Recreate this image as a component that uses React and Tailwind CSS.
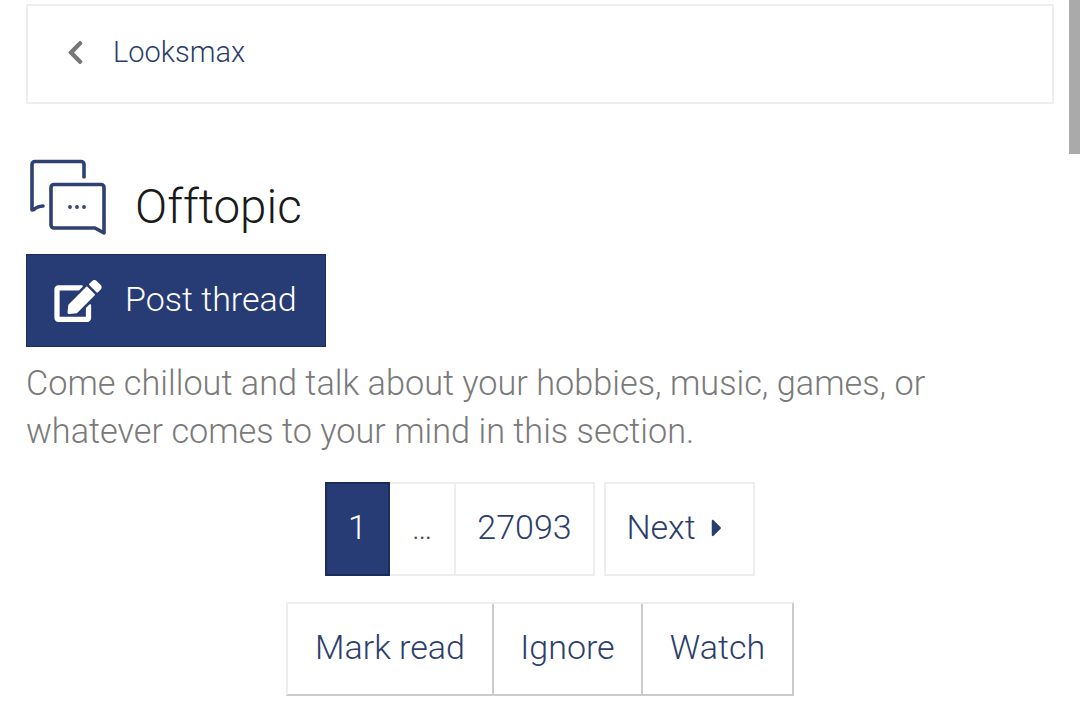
import React from "react";
import { FaEdit, FaChevronLeft, FaCaretRight } from "react-icons/fa";

const ChatIcon = () => (
  <svg width="80" height="80" viewBox="0 0 80 80" fill="none" stroke="#2f4170" strokeWidth="3.6" strokeLinecap="round" strokeLinejoin="round">
    <path d="M54 18V5.5a3 3 0 0 0-3-3H5a3 3 0 0 0-3 3V51l2-.5q3-3 9-3.500" />
    <path d="M24 25.500h47a3 3 0 0 1 3 3V74l-9-5H24a3 3 0 0 1-3-3V28.500a3 3 0 0 1 3-3z" />
    <circle cx="40" cy="48" r="0.8" fill="#2f4170" strokeWidth="2.2" />
    <circle cx="47" cy="48" r="0.8" fill="#2f4170" strokeWidth="2.2" />
    <circle cx="54" cy="48" r="0.8" fill="#2f4170" strokeWidth="2.2" />
  </svg>
);

const PageCell = ({ children, className = "" }) => (
  <a className={"flex items-center justify-center h-[94px] pb-[3px] border-2 border-[#eeeeee] text-[#2c3e6b] " + className}>
    {children}
  </a>
);

export default function App() {
  return (
    <div className="relative h-[721px] overflow-hidden bg-white px-[26px] pt-1 font-['Roboto',sans-serif] font-light">
      {/* Breadcrumb */}
      <div className="flex items-center h-[100px] border-2 border-[#eeeeee] pl-[34px]">
        <FaChevronLeft className="text-[#777777] text-[27px] w-[27px] mb-[3px]" />
        <span className="ml-[24px] pb-[3px] text-[29px] text-[#2c3e6b]">Looksmax</span>
      </div>

      {/* Title */}
      <div className="flex items-center mt-[55px] h-[80px] pl-[4px]">
        <ChatIcon />
        <h1 className="ml-[25px] mt-[16px] text-[47.500px] leading-[60px] text-[#1a1a1a] font-light">Offtopic</h1>
      </div>

      <button className="flex items-center mt-[15px] w-[300px] h-[93px] pl-[27px] bg-[#273c75] border border-[#1c2c58] text-white">
        <FaEdit className="text-[42px] w-[48px]" />
        <span className="ml-[23px] pb-[3px] text-[34px]">Post thread</span>
      </button>

      <p className="mt-[12px] text-[34.250px] leading-[48px] text-[#7a7a7a]">
        Come chillout and talk about your hobbies, music, games, or whatever comes to your mind in this section.
      </p>

      {/* Pagination */}
      <div className="flex justify-center mt-[27px] gap-[9px] text-[34px]">
        <div className="flex">
          <PageCell className="w-[65px] !bg-[#273c75] !border-[#1c2c58] !text-white">1</PageCell>
          <PageCell className="w-[66px] border-l-0 !text-[#555555] text-[32px]">…</PageCell>
          <PageCell className="w-[139px] border-l-0">27093</PageCell>
        </div>
        <PageCell className="w-[151px]">
          Next
          <FaCaretRight className="ml-[7px] mr-[2px] text-[28px]" />
        </PageCell>
      </div>

      {/* Actions */}
      <div className="flex justify-center mt-[26px] text-[34px] text-[#2c3e6b]">
        <div className="flex h-[94px] border-2 border-[#eeeeee] border-b-[#cccccc] border-r-[#cccccc]">
          <a className="flex items-center justify-center w-[206px] pb-[3px] border-r-2 border-[#cccccc]">Mark read</a>
          <a className="flex items-center justify-center w-[149px] pb-[3px] border-r-2 border-[#cccccc]">Ignore</a>
          <a className="flex items-center justify-center w-[149px] pb-[3px]">Watch</a>
        </div>
      </div>

      {/* Scrollbar thumb */}
      <div className="absolute right-0 top-0 w-[11px] h-[154px] bg-[#aaaaaa]" />
    </div>
  );
}
